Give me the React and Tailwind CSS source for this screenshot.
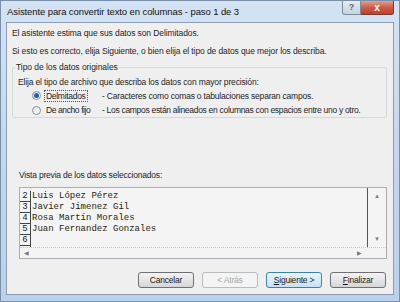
import React from "react";

const rows = [
  { n: "2", text: "Luis López Pérez" },
  { n: "3", text: "Javier Jimenez Gil" },
  { n: "4", text: "Rosa Martín Morales" },
  { n: "5", text: "Juan Fernandez Gonzales" },
  { n: "6", text: "" },
];

const mono = { fontFamily: '"Liberation Mono", "Courier New", monospace' };

const Radio = ({ checked }) => (
  <span className="w-[9px] h-[9px] rounded-full border border-[#8a8f96] bg-gradient-to-br from-[#e3e6ea] to-[#fbfbfb] flex items-center justify-center">
    {checked && <span className="w-[5px] h-[5px] rounded-full bg-gradient-to-br from-[#2e6fb8] to-[#1b4f8c]" />}
  </span>
);

const Button = ({ children, disabled, focused }) => (
  <button
    className={
      "w-[56px] h-[16px] rounded-[3px] border text-[8.5px] tracking-[-0.2px] leading-none flex items-center justify-center " +
      (disabled
        ? "border-[#b8bcc0] bg-[#f4f4f4] text-[#a6a6a6]"
        : focused
        ? "border-[#3c7fb1] bg-gradient-to-b from-[#eaf6fd] to-[#c4e2f4] text-[#1a1a1a]"
        : "border-[#707070] bg-gradient-to-b from-[#f3f3f3] via-[#e6e6e6] to-[#d6d6d6] text-[#1a1a1a]")
    }
  >
    {children}
  </button>
);

export default function App() {
  return (
    <div
      className="w-[400px] h-[302px] bg-gradient-to-b from-[#d3e3f4] via-[#c3d8ee] to-[#b9d1ea] flex flex-col border border-[#7a8ea8] text-[#1e1e1e]"
      style={{ fontFamily: '"Liberation Sans", Arial, sans-serif' }}
    >
      {/* title bar */}
      <div className="h-[21px] flex items-start shrink-0">
        <div className="pl-[6px] pt-[4px] text-[9.5px] tracking-[-0.1px] leading-[13px] text-[#111] whitespace-nowrap">
          Asistente para convertir texto en columnas - paso 1 de 3
        </div>
        <div className="ml-auto flex mr-[5px]">
          <div className="w-[19px] h-[14px] rounded-bl-[3px] border border-t-0 border-[#7b8a9e] bg-gradient-to-b from-[#e5ecf4] to-[#c6d3e2] flex items-center justify-center text-[9px] font-bold text-[#5b6d84]">
            ?
          </div>
          <div className="w-[33px] h-[14px] rounded-br-[3px] border border-t-0 border-l-0 border-[#7b3a30] bg-gradient-to-b from-[#e3a08e] via-[#cc5b48] to-[#c04030] flex items-center justify-center text-[10px] font-bold text-white">
            x
          </div>
        </div>
      </div>

      {/* content */}
      <div className="mx-[5px] mb-[6px] flex-1 border border-[#8c9cb2] bg-[#efefef] flex flex-col px-[5px] text-[8.5px] tracking-[-0.1px] leading-[12px] whitespace-nowrap">
        <div className="mt-[4px]">El asistente estima que sus datos son Delimitados.</div>
        <div className="mt-[6px]">
          Si esto es correcto, elija Siguiente, o bien elija el tipo de datos que mejor los describa.
        </div>

        {/* group */}
        <div className="mt-[10px] w-[375px] h-[51px] border border-[#d5d9dd] rounded-[2px] flex flex-col">
          <div className="-mt-[7px] ml-[2px] px-[1px] self-start bg-[#efefef] tracking-[-0.05px]">Tipo de los datos originales</div>
          <div className="ml-[5px] mt-[3px] tracking-[-0.15px]">Elija el tipo de archivo que describa los datos con mayor precisión:</div>
          <div className="flex items-center mt-[1px] h-[14px]">
            <span className="ml-[19px]"><Radio checked /></span>
            <span className="ml-[4px] w-[57px] tracking-[-0.3px]">
              <span className="outline outline-1 outline-dotted outline-[#555] px-[1px]">Delmitados</span>
            </span>
            <span className="tracking-[-0.2px]">- Caracteres como comas o tabulaciones separan campos.</span>
          </div>
          <div className="flex items-center mt-[1px] h-[14px]">
            <span className="ml-[19px]"><Radio /></span>
            <span className="ml-[4px] w-[57px] pl-[1px] tracking-[-0.4px]">De ancho fijo</span>
            <span className="tracking-[-0.3px]">- Los campos están alineados en columnas con espacios entre uno y otro.</span>
          </div>
        </div>

        <div className="mt-[51px] ml-[7px] tracking-[-0.2px]">Vista previa de los datos seleccionados:</div>

        {/* preview */}
        <div className="mt-[6px] ml-[7px] w-[368px] h-[72px] border border-[#a9aeb4] bg-[#f4f4f4] flex flex-col">
          <div className="flex flex-1 min-h-0">
            <div className="w-[348px] flex flex-col pt-[3px] border-r border-[#555]">
              {rows.map((r) => (
                <div key={r.n} className="flex h-[11px]">
                  <div className="w-[11px] text-center border-r border-b border-[#444] text-[9px] leading-[10px] text-[#222] tracking-normal" style={mono}>
                    {r.n}
                  </div>
                  <div className="pl-[1px] text-[9px] leading-[11px] text-[#2a2412] whitespace-pre tracking-normal" style={mono}>
                    {r.text}
                  </div>
                </div>
              ))}
              <div className="flex-1 flex">
                <div className="w-[11px] border-r border-[#444]" />
              </div>
            </div>
            <div className="w-[18px] flex flex-col items-center justify-between py-[5px] text-[6px] leading-none text-[#7a7a7a]">
              <span>▲</span>
              <span>▼</span>
            </div>
          </div>
          <div className="h-[11px] border-t border-dotted border-[#c8c8c8] flex items-center justify-between px-[4px] text-[6px] leading-none text-[#7a7a7a]">
            <span>◀</span>
            <span className="mr-[20px]">▶</span>
          </div>
        </div>

        {/* buttons */}
        <div className="mt-auto mb-[6px] flex justify-end gap-[8px] pr-[2px]">
          <Button>Cancelar</Button>
          <Button disabled>&lt; Atrás</Button>
          <Button focused>
            <span><span className="underline">S</span>iguiente &gt;</span>
          </Button>
          <Button>
            <span><span className="underline">F</span>inalizar</span>
          </Button>
        </div>
      </div>
    </div>
  );
}
